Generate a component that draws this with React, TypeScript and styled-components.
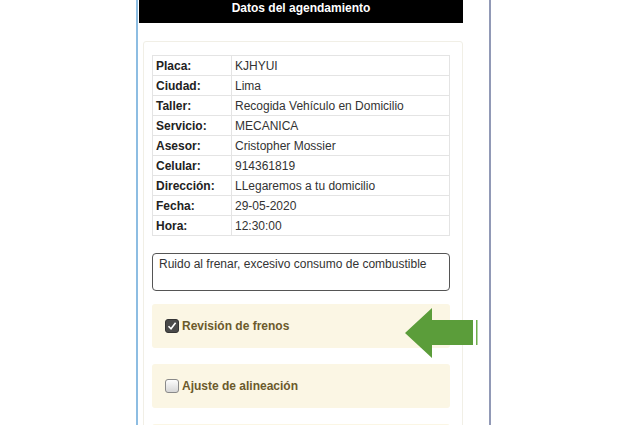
import styled, { createGlobalStyle } from "styled-components";

const GlobalStyle = createGlobalStyle`
  html, body {
    margin: 0;
    padding: 0;
    background: #fff;
    font-family: "Liberation Sans", Arial, sans-serif;
  }
`;

const Page = styled.div`
  width: 640px;
  height: 425px;
  overflow: hidden;
  background: #fff;
`;

const PhoneFrame = styled.div`
  position: relative;
  margin-left: 136px;
  width: 351px;
  height: 425px;
  border-left: 2px solid #8dbde2;
  border-right: 2px solid #9199b6;
  overflow: hidden;
`;

const Content = styled.div`
  width: 324px;
  margin-left: 1px;
`;

const Header = styled.div`
  height: 23px;
  line-height: 17px;
  background: #000;
  color: #fff;
  font-weight: bold;
  font-size: 12px;
  text-align: center;
`;

const Card = styled.div`
  margin: 18px 0 0 4px;
  width: 320px;
  box-sizing: border-box;
  border: 1px solid #f1efe6;
  border-radius: 3px;
  padding: 13px 12px 0 8px;
`;

const InfoTable = styled.table`
  width: 298px;
  border-collapse: collapse;
  font-size: 12px;
  color: #2a2a2a;
`;

const Row = styled.tr`
  height: 20px;
`;

const Cell = styled.td<{ $label?: boolean }>`
  border: 1px solid #e4e4e4;
  padding: 0 3px;
  width: ${(p) => (p.$label ? "72px" : "auto")};
  font-weight: ${(p) => (p.$label ? "bold" : "normal")};
  color: ${(p) => (p.$label ? "#222" : "#333")};
  white-space: nowrap;
`;

const Notes = styled.div`
  margin-top: 17px;
  height: 38px;
  box-sizing: border-box;
  border: 1px solid #555;
  border-radius: 4px;
  padding: 3px 6px;
  font-size: 12px;
  color: #333;
`;

const Option = styled.div`
  margin-top: ${(p: { $first?: boolean }) => (p.$first ? "13px" : "16px")};
  height: 44px;
  display: flex;
  align-items: center;
  gap: 3px;
  padding-left: 13px;
  background: #fbf6e4;
  border-radius: 3px;
  font-size: 12px;
  font-weight: bold;
  color: #6b5a2c;
`;

const Box = styled.span<{ $checked?: boolean }>`
  width: 14px;
  height: 14px;
  box-sizing: border-box;
  border-radius: 3px;
  display: flex;
  align-items: center;
  justify-content: center;
  border: 1px solid ${(p) => (p.$checked ? "#333" : "#8a8a8a")};
  background: ${(p) =>
    p.$checked ? "#4a4a4a" : "linear-gradient(#fdfdfd, #d6d6d6)"};
`;

const Arrow = styled.svg`
  position: absolute;
  left: 267px;
  top: 307px;
`;

const rows: [string, string][] = [
  ["Placa:", "KJHYUI"],
  ["Ciudad:", "Lima"],
  ["Taller:", "Recogida Vehículo en Domicilio"],
  ["Servicio:", "MECANICA"],
  ["Asesor:", "Cristopher Mossier"],
  ["Celular:", "914361819"],
  ["Dirección:", "LLegaremos a tu domicilio"],
  ["Fecha:", "29-05-2020"],
  ["Hora:", "12:30:00"],
];

function CheckBox({ checked }: { checked?: boolean }) {
  return (
    <Box $checked={checked}>
      {checked && (
        <svg width="10" height="10" viewBox="0 0 10 10">
          <path
            d="M1.5 5.2 L4 7.8 L8.6 1.8"
            fill="none"
            stroke="#fff"
            strokeWidth="1.6"
          />
        </svg>
      )}
    </Box>
  );
}

export default function App() {
  return (
    <Page>
      <GlobalStyle />
      <PhoneFrame>
        <Content>
          <Header>Datos del agendamiento</Header>
          <Card>
            <InfoTable>
              <tbody>
                {rows.map(([label, value]) => (
                  <Row key={label}>
                    <Cell $label>{label}</Cell>
                    <Cell>{value}</Cell>
                  </Row>
                ))}
              </tbody>
            </InfoTable>
            <Notes>Ruido al frenar, excesivo consumo de combustible</Notes>
            <Option $first>
              <CheckBox checked />
              Revisión de frenos
            </Option>
            <Option>
              <CheckBox />
              Ajuste de alineación
            </Option>
            <Option />
          </Card>
        </Content>
        <Arrow width="76" height="54" viewBox="0 0 76 54">
          <polygon
            points="0,26 27,1 27,13 68,13 68,38 27,38 27,51"
            fill="#5b9d3a"
          />
          <rect x="71" y="13" width="1.5" height="25" fill="#6fae4c" />
        </Arrow>
      </PhoneFrame>
    </Page>
  );
}
